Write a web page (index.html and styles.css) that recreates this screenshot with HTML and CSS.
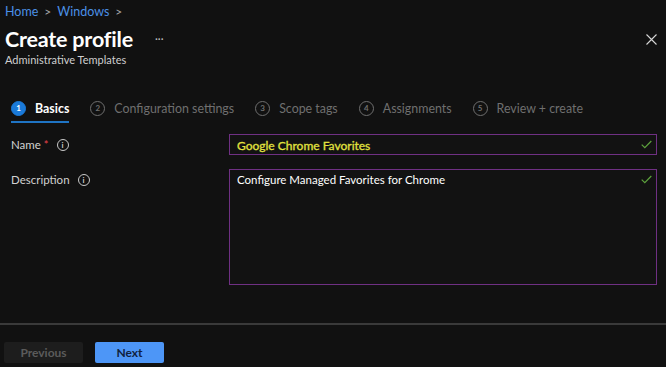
FILE: index.html
```html
<!DOCTYPE html>
<html lang="en">
<head>
    <meta charset="UTF-8">
    <title>Create profile - Windows</title>
    <link rel="stylesheet" href="styles.css">
</head>
<body>
    <div class="blade">
        <div class="breadcrumb">
            <a href="#">Home</a>
            <span class="chev">&gt;</span>
            <a href="#">Windows</a>
            <span class="chev">&gt;</span>
        </div>

        <div class="header">
            <div class="title-row">
                <h1>Create profile</h1>
                <span class="more">&middot;&middot;&middot;</span>
            </div>
            <button class="close" aria-label="Close">
                <svg width="11" height="11" viewBox="0 0 11 11"><path d="M0.5 0.5 L10.5 10.5 M10.5 0.5 L0.5 10.5" stroke="#d6d6d6" stroke-width="1.1"/></svg>
            </button>
        </div>
        <p class="subtitle">Administrative Templates</p>

        <!-- Wizard steps -->
        <div class="steps">
            <div class="step active"><span class="num">1</span><span class="label">Basics</span></div>
            <div class="step"><span class="num">2</span><span class="label">Configuration settings</span></div>
            <div class="step"><span class="num">3</span><span class="label">Scope tags</span></div>
            <div class="step"><span class="num">4</span><span class="label">Assignments</span></div>
            <div class="step"><span class="num">5</span><span class="label">Review + create</span></div>
        </div>

        <div class="form">
            <div class="form-row">
                <label class="field-label">Name <span class="req">*</span> <span class="info">i</span></label>
                <div class="field">
                    <input type="text" class="text-input name-input" value="Google Chrome Favorites">
                    <svg class="check" width="11" height="9" viewBox="0 0 11 9"><path d="M0.7 4.6 L3.8 7.7 L10.3 1" fill="none" stroke="#5da23d" stroke-width="1.2"/></svg>
                </div>
            </div>
            <div class="form-row">
                <label class="field-label">Description <span class="info">i</span></label>
                <div class="field">
                    <textarea class="text-area">Configure Managed Favorites for Chrome</textarea>
                    <svg class="check" width="11" height="9" viewBox="0 0 11 9"><path d="M0.7 4.6 L3.8 7.7 L10.3 1" fill="none" stroke="#5da23d" stroke-width="1.2"/></svg>
                </div>
            </div>
        </div>

        <div class="footer">
            <button class="btn btn-prev" disabled>Previous</button>
            <button class="btn btn-next">Next</button>
        </div>
    </div>
</body>
</html>
```

FILE: styles.css
```css
* {
    margin: 0;
    padding: 0;
    box-sizing: border-box;
}

body {
    font-family: Lato, 'Noto Sans', sans-serif;
    background: #111111;
    color: #e8e8e8;
    width: 666px;
    height: 367px;
    overflow: hidden;
}

.blade {
    display: flex;
    flex-direction: column;
    height: 100%;
}

.breadcrumb {
    display: flex;
    align-items: center;
    gap: 6px;
    padding: 3px 0 0 5px;
    height: 20px;
    font-size: 12.5px;
}

.breadcrumb a {
    color: #4b90e6;
    text-decoration: none;
}

.breadcrumb .chev {
    color: #a9a9a9;
    font-size: 12px;
}

.header {
    display: flex;
    justify-content: space-between;
    align-items: center;
    padding: 7px 9px 0 5px;
    height: 31px;
}

.title-row {
    display: flex;
    align-items: center;
    gap: 22px;
}

h1 {
    font-size: 21.5px;
    font-weight: 700;
    color: #ffffff;
    letter-spacing: -0.2px;
}

.more {
    color: #bcbcbc;
    font-size: 11px;
    margin-top: -2px;
}

.close {
    background: none;
    border: none;
    display: flex;
}

.subtitle {
    font-size: 11px;
    color: #cfcfcf;
    padding: 2px 0 0 5px;
}

.steps {
    display: flex;
    align-items: center;
    gap: 21px;
    padding: 30px 0 0 11px;
}

.step {
    display: flex;
    align-items: center;
    gap: 9px;
    height: 24px;
    color: #6f6f6f;
    font-size: 12.4px;
    position: relative;
}

.step .num {
    width: 15px;
    height: 15px;
    border-radius: 50%;
    border: 1px solid #6f6f6f;
    font-size: 8px;
    font-weight: 700;
    display: flex;
    justify-content: center;
    align-items: center;
}

.step.active {
    color: #ffffff;
    font-weight: 700;
}

.step.active .num {
    background: #1a7ad9;
    border-color: #1a7ad9;
    color: #ffffff;
}

.step.active::after {
    content: "";
    position: absolute;
    left: 0;
    right: 0;
    bottom: -3px;
    height: 2px;
    background: #1f74c4;
}

.form {
    display: flex;
    flex-direction: column;
    gap: 14px;
    padding: 14px 9px 0 11px;
}

.form-row {
    display: flex;
    align-items: flex-start;
}

.field-label {
    width: 218px;
    font-size: 11.5px;
    color: #d2d2d2;
    display: flex;
    align-items: center;
    padding-top: 4px;
}

.req {
    color: #e8434b;
    margin-left: 3px;
    font-size: 11px;
}

.info {
    width: 12px;
    height: 12px;
    border: 1px solid #c9c9c9;
    border-radius: 50%;
    font-size: 8px;
    font-weight: 700;
    color: #c9c9c9;
    display: inline-flex;
    justify-content: center;
    align-items: center;
    margin-left: 8px;
}

.field {
    flex: 1;
    position: relative;
}

.text-input,
.text-area {
    width: 100%;
    background: #121212;
    border: 1px solid #6f3083;
    font-family: Lato, 'Noto Sans', sans-serif;
    padding: 2px 24px 0 7px;
    outline: none;
    display: block;
}

.text-input {
    height: 21px;
    color: #e2e23f;
    font-size: 12px;
    -webkit-text-stroke: 0.3px #e2e23f;
}

.text-area {
    height: 116px;
    color: #ffffff;
    font-size: 11.5px;
    resize: none;
    padding-top: 3px;
}

.check {
    position: absolute;
    right: 5px;
    top: 6px;
}

.footer {
    margin-top: auto;
    border-top: 2px solid #3a3a3a;
    display: flex;
    gap: 12px;
    padding: 17px 0 4px 4px;
}

.btn {
    height: 21px;
    border: none;
    border-radius: 2px;
    font-family: Lato, 'Noto Sans', sans-serif;
    font-size: 12px;
    font-weight: 700;
}

.btn-prev {
    width: 79px;
    background: #1d1d1d;
    color: #5b5b5b;
}

.btn-next {
    width: 69px;
    background: #4d96f7;
    color: #10223f;
}
```
